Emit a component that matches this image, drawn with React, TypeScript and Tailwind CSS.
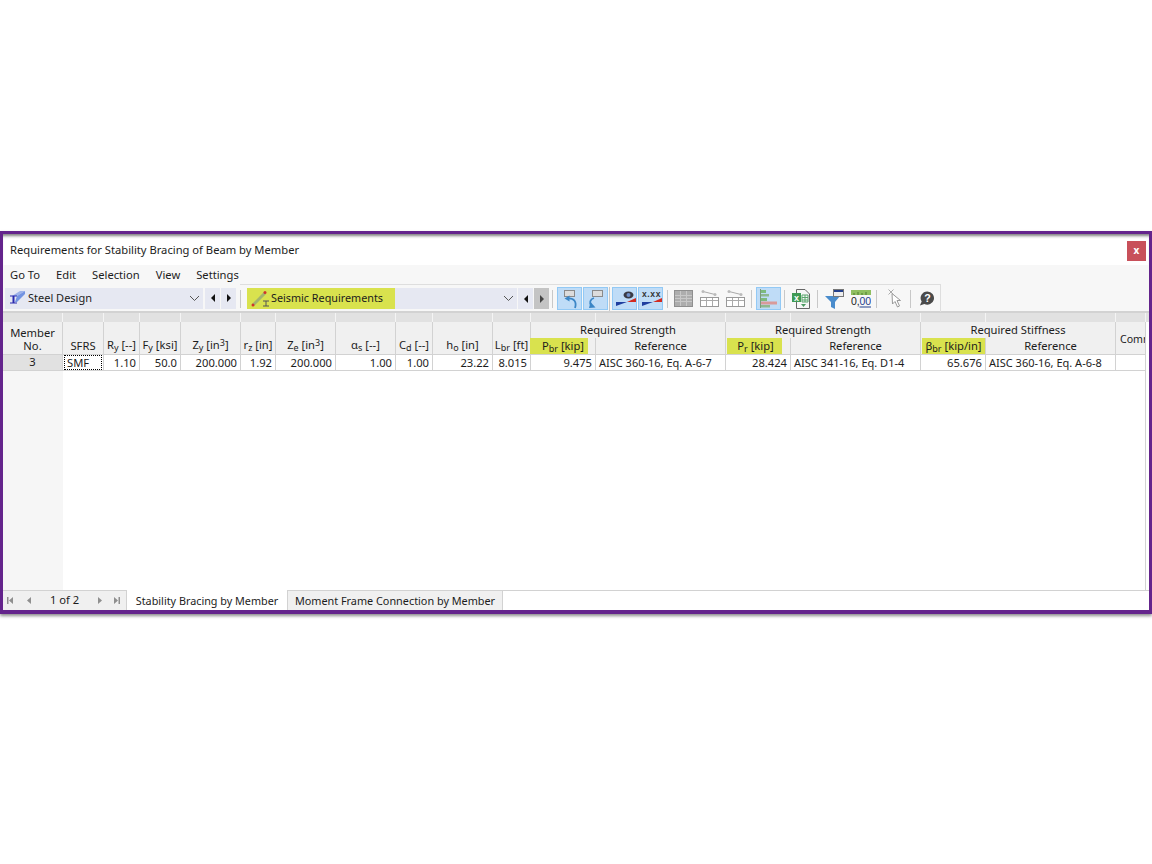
import React from "react";

const Sub = ({ children }: { children: React.ReactNode }) => (
  <span className="text-[9px] relative top-[2px]">{children}</span>
);
const Sup = ({ children }: { children: React.ReactNode }) => (
  <span className="text-[9px] relative top-[-3px]">{children}</span>
);

const Sep = ({ tall }: { tall?: boolean }) => (
  <div className={tall ? "w-px h-[24px] bg-[#c8c8c8] shrink-0" : "w-px h-[18px] bg-[#c8c8c8] shrink-0"} />
);

const Arrow = ({ dir, color = "#111" }: { dir: "l" | "r"; color?: string }) => (
  <svg width="6" height="8" viewBox="0 0 6 8">
    <path d={dir === "l" ? "M5 0V8L1 4Z" : "M1 0V8L5 4Z"} fill={color} />
  </svg>
);

const Chevron = () => (
  <svg width="11" height="7" viewBox="0 0 11 7" fill="none">
    <path d="M1 1L5.5 5.5L10 1" stroke="#555" strokeWidth="1" />
  </svg>
);

const Btn = ({ children, active }: { children: React.ReactNode; active?: boolean }) => (
  <div
    className={
      active
        ? "w-[25px] h-[23px] flex items-center justify-center bg-[#bfdcf7] border border-[#92c9f5] shrink-0"
        : "w-[25px] h-[23px] flex items-center justify-center shrink-0"
    }
  >
    {children}
  </div>
);

const BeamIcon = () => (
  <svg width="16" height="16" viewBox="0 0 16 16">
    <path d="M3 6L11 1H16L8 6Z" fill="#9db2ea" />
    <path d="M8 6L16 1V4L8 12H6Z" fill="#7393e2" />
    <path d="M1 5.5H8V6.5H5.5V12.5H8V13.5H1V12.5H3.5V6.5H1Z" fill="#2a2ab0" />
  </svg>
);

const SeismicIcon = () => (
  <svg width="20" height="18" viewBox="0 0 20 18" className="shrink-0">
    <path d="M2 15L14 3" stroke="#a3b56c" strokeWidth="3" />
    <circle cx="2" cy="15" r="1.5" fill="#d0342c" />
    <circle cx="14" cy="2.5" r="1.5" fill="#d0342c" />
    <path d="M12 11H18M15 11V16M12 16H18" stroke="#555" strokeWidth="1" />
  </svg>
);

const UndoIcon = ({ flip }: { flip?: boolean }) => (
  <svg width="21" height="21" viewBox="0 0 21 21" fill="none">
    {flip ? (
      <>
        <rect x="7.5" y="2.5" width="10" height="6" fill="#dcdcdc" stroke="#8a8a8a" />
        <path d="M9 10C5 11 4 15 6.5 17.5" stroke="#3b86c6" strokeWidth="1.8" />
        <path d="M4 20L10.5 19.5L5.5 14Z" fill="#3b86c6" />
      </>
    ) : (
      <>
        <rect x="5.5" y="2.5" width="10" height="6" fill="#dcdcdc" stroke="#8a8a8a" />
        <path d="M9 10.5C15 10 18 14 16 20" stroke="#3b86c6" strokeWidth="1.8" />
        <path d="M5.5 10.5L10.5 7.5V13.5Z" fill="#3b86c6" />
      </>
    )}
  </svg>
);

const EyeIcon = () => (
  <svg width="23" height="21" viewBox="0 0 23 21">
    <ellipse cx="15.5" cy="7" rx="5" ry="3.5" fill="#3a3a44" />
    <circle cx="15.5" cy="7" r="2" fill="#6f8fc8" />
    <path d="M3 18V14H14Z" fill="#1f3fa0" />
    <path d="M14 14H23V10Z" fill="#d22a20" />
  </svg>
);

const XxxIcon = () => (
  <svg width="23" height="21" viewBox="0 0 23 21">
    <text x="12.5" y="9" textAnchor="middle" fontSize="8.5" fontWeight="700" fill="#333" fontFamily="Liberation Sans, sans-serif" letterSpacing="0.6">x.xx</text>
    <path d="M3 18V14H14Z" fill="#1f3fa0" />
    <path d="M14 14H23V10Z" fill="#d22a20" />
  </svg>
);

const GridIcon = () => (
  <svg width="19" height="18" viewBox="0 0 19 18" fill="none" className="shrink-0">
    <rect x="0.5" y="0.5" width="18" height="16" fill="#adadad" stroke="#8f8f8f" />
    <path d="M1 5.5H18M1 8.5H18M1 11.5H18M6.5 1V16M12.5 1V16" stroke="#c8c8c8" />
  </svg>
);

const TableLinkIcon = () => (
  <svg width="19" height="18" viewBox="0 0 19 18" fill="none" className="shrink-0">
    <path d="M3 1.5L15 4.5" stroke="#aaa" />
    <circle cx="3" cy="1.5" r="1.5" fill="#bbb" />
    <circle cx="15" cy="4.5" r="1.5" fill="#bbb" />
    <rect x="0.5" y="7.5" width="18" height="9" fill="#fff" stroke="#999" />
    <path d="M1 10.5H18M6.5 8V16M12.5 8V16" stroke="#aaa" />
  </svg>
);

const BarsIcon = () => (
  <svg width="19" height="21" viewBox="0 0 19 21">
    <path d="M1.5 1V20" stroke="#7a9a7a" />
    <rect x="2" y="2" width="5" height="3" fill="#7dbb7d" />
    <rect x="2" y="6" width="8" height="2.5" fill="#8fb88f" />
    <rect x="2" y="10" width="6" height="3" fill="#7dbb7d" />
    <rect x="2" y="13.5" width="16" height="3" fill="#d99a9a" />
    <rect x="2" y="17" width="9" height="2.5" fill="#8fb88f" />
  </svg>
);

const ExcelIcon = () => (
  <svg width="18" height="20" viewBox="0 0 18 20" className="shrink-0">
    <path d="M4.5 0.5H13L17.5 5V19.5H4.5Z" fill="#f6f6f6" stroke="#666" />
    <rect x="0" y="4" width="9" height="9" fill="#3f9a55" />
    <text x="4.5" y="11.5" textAnchor="middle" fontSize="9" fontWeight="700" fill="#fff" fontFamily="Liberation Sans, sans-serif">x</text>
    <path d="M10 6H16V13H10ZM10 8.5H16M10 11H16M13 6V13" stroke="#5aa56d" fill="none" />
    <path d="M9 15H14L11.5 18Z" fill="#4a9a60" />
  </svg>
);

const FunnelIcon = () => (
  <svg width="19" height="20" viewBox="0 0 19 20" className="shrink-0">
    <path d="M0 7H15L10 13V20L6 18V13Z" fill="#4a8ccc" />
    <rect x="8.5" y="0.5" width="10" height="7" fill="#eee" stroke="#777" />
    <rect x="9" y="1" width="9" height="2" fill="#24408c" />
  </svg>
);

const DecimalIcon = () => (
  <svg width="20" height="20" viewBox="0 0 20 20" className="shrink-0">
    <rect x="0" y="1" width="20" height="5" fill="#8fbf60" />
    <path d="M3 4V6M7 3V6M11 4V6M15 3V6" stroke="#4d7a2e" />
    <text x="0" y="16" fontSize="10.5" fill="#222" fontFamily="Liberation Sans, sans-serif">0,</text>
    <text x="8.5" y="16" fontSize="10.5" fill="#24408c" fontFamily="Liberation Sans, sans-serif">00</text>
    <path d="M8.5 18H20" stroke="#24408c" />
  </svg>
);

const CursorIcon = () => (
  <svg width="15" height="20" viewBox="0 0 15 20" fill="none" className="shrink-0">
    <path d="M0.5 0.5L5.5 5.5M5.5 0.5L0.5 5.5" stroke="#aaa" />
    <path d="M4 4.5L4.5 15L7 12.5L9.5 18L11.5 17L9 11.5L12.5 11.5Z" fill="#fff" stroke="#999" />
  </svg>
);

const HelpIcon = () => (
  <svg width="16" height="17" viewBox="0 0 18 18" className="shrink-0">
    <path d="M9.5 1A7.5 7.5 0 1 1 6 15.2L1 17L3 12.5A7.5 7.5 0 0 1 9.5 1Z" fill="#4a4a4a" />
    <text x="9.7" y="13" textAnchor="middle" fontSize="12" fontWeight="700" fill="#fff" fontFamily="Liberation Sans, sans-serif">?</text>
  </svg>
);

const bandCell = "bg-[#e1e1e1] border-r border-[#f4f4f4]";
const h = "bg-[#f0f0f0] border-r border-b border-[#d2d2d2] flex items-end justify-center pb-px leading-[15px] whitespace-nowrap";
const top = "bg-[#f0f0f0] border-r border-[#d2d2d2] flex items-start justify-center leading-[15px] whitespace-nowrap";
const d = "bg-white border-r border-b border-[#d2d2d2] flex items-center justify-end pr-[3px] pt-px whitespace-nowrap";
const dl = "bg-white border-r border-b border-[#d2d2d2] flex items-center pl-[3px] pt-px whitespace-nowrap text-[11px]";

const COLS = 18;

const Tri = ({ dir }: { dir: "first" | "prev" | "next" | "last" }) => (
  <svg width="8" height="9" viewBox="0 0 8 9" fill="#8f8f8f">
    {dir === "first" && <path d="M1 1H2.5V8H1ZM7 1V8L3 4.5Z" />}
    {dir === "prev" && <path d="M6 1V8L2 4.5Z" />}
    {dir === "next" && <path d="M2 1V8L6 4.5Z" />}
    {dir === "last" && <path d="M7 1H5.5V8H7ZM1 1V8L5 4.5Z" />}
  </svg>
);

export default function App() {
  return (
    <div className="w-[1152px] h-[864px] bg-white pt-[231px] overflow-hidden text-[11.2px] text-[#1c1c1c] font-['Noto_Sans',sans-serif]">
      <div className="h-[383px] border-x-[3px] border-t-[3px] border-b-[4px] border-[#64248c] flex flex-col bg-white shadow-[0_2px_3px_rgba(0,0,0,0.45)]">
        {/* title */}
        <div className="h-[31px] shrink-0 flex items-center justify-between pl-[7px] pr-[3px] shadow-[inset_0_4px_3px_-2px_rgba(0,0,0,0.5)]">
          <span className="pt-[2px] whitespace-nowrap">Requirements for Stability Bracing of Beam by Member</span>
          <div className="w-[19px] h-[20px] mt-[2px] bg-[#c8505a] text-white flex items-center justify-center text-[10px] font-bold">x</div>
        </div>
        {/* menu */}
        <div className="h-[20px] shrink-0 bg-[#f7f7f7] flex items-center pl-[7px] gap-[16px] whitespace-nowrap">
          <span>Go To</span>
          <span>Edit</span>
          <span>Selection</span>
          <span>View</span>
          <span>Settings</span>
        </div>
        {/* toolbar */}
        <div className="h-[28px] shrink-0 bg-[#f7f7f7] flex items-center border-b-2 border-[#d2d2d2] pl-[2px]">
          <div className="w-[198px] h-[21px] bg-[#e6e8f2] flex items-center justify-between pl-[4px] pr-[3px] shrink-0">
            <div className="flex items-center gap-[3px]">
              <BeamIcon />
              <span className="text-[11px] whitespace-nowrap">Steel Design</span>
            </div>
            <Chevron />
          </div>
          <div className="w-[15px] h-[21px] ml-[2px] bg-[#e6e8f2] flex items-center justify-center"><Arrow dir="l" /></div>
          <div className="w-[15px] h-[21px] ml-px bg-[#e6e8f2] flex items-center justify-center"><Arrow dir="r" /></div>
          <div className="h-[28px] ml-[4px] flex items-center border-t border-r border-[#dedede] w-[701px] shrink-0">
            <Sep />
            <div className="ml-[6px] w-[270px] h-[21px] bg-[#e6e8f2] flex items-center justify-between pr-[3px] shrink-0">
              <div className="w-[148px] h-[21px] bg-[#d9e24e] flex items-center pl-[4px]">
                <SeismicIcon />
                <span className="text-[10.8px] whitespace-nowrap">Seismic Requirements</span>
              </div>
              <Chevron />
            </div>
            <div className="w-[15px] h-[21px] ml-px bg-[#e6e8f2] flex items-center justify-center"><Arrow dir="l" /></div>
            <div className="w-[15px] h-[21px] ml-px bg-[#c4c4c4] flex items-center justify-center"><Arrow dir="r" color="#444" /></div>
            <div className="ml-[3px]"><Sep /></div>
            <div className="ml-[4px] flex gap-px"><Btn active><UndoIcon /></Btn><Btn active><UndoIcon flip /></Btn></div>
            <div className="ml-px"><Sep tall /></div>
            <div className="ml-[2px] flex gap-px"><Btn active><EyeIcon /></Btn><Btn active><XxxIcon /></Btn></div>
            <div className="ml-[4px]"><Sep /></div>
            <div className="ml-[6px]"><GridIcon /></div>
            <div className="ml-[7px]"><TableLinkIcon /></div>
            <div className="ml-[7px]"><TableLinkIcon /></div>
            <div className="ml-[6px]"><Sep /></div>
            <div className="ml-[4px]"><Btn active><BarsIcon /></Btn></div>
            <div className="ml-[3px]"><Sep /></div>
            <div className="ml-[7px]"><ExcelIcon /></div>
            <div className="ml-[7px]"><Sep /></div>
            <div className="ml-[7px]"><FunnelIcon /></div>
            <div className="ml-[7px]"><DecimalIcon /></div>
            <div className="ml-[5px]"><Sep /></div>
            <div className="ml-[11px]"><CursorIcon /></div>
            <div className="ml-[7px]"><Sep /></div>
            <div className="ml-[8px]"><HelpIcon /></div>
          </div>
        </div>
        {/* table */}
        <div className="flex-1 min-h-0 flex flex-col overflow-hidden">
          <div className="grid grid-cols-[60px_41px_36px_41px_60px_35px_60px_60px_37px_60px_38px_65px_130px_65px_130px_65px_130px_30px_1fr] grid-rows-[9px_16px_17px_16px] shrink-0">
            {Array.from({ length: COLS }).map((_, i) => (
              <div key={i} className={bandCell} />
            ))}
            <div className="bg-[#e1e1e1]" />

            <div className="row-span-2 bg-[#f0f0f0] border-r border-b border-[#d2d2d2] flex flex-col items-center pt-[4px] leading-[13px] whitespace-nowrap">
              <span>Member</span>
              <span>No.</span>
            </div>
            <div className={`${h} row-span-2`}>SFRS</div>
            <div className={`${h} row-span-2`}><span>R<Sub>y</Sub> [--]</span></div>
            <div className={`${h} row-span-2`}><span>F<Sub>y</Sub> [ksi]</span></div>
            <div className={`${h} row-span-2`}><span>Z<Sub>y</Sub> [in<Sup>3</Sup>]</span></div>
            <div className={`${h} row-span-2`}><span>r<Sub>z</Sub> [in]</span></div>
            <div className={`${h} row-span-2`}><span>Z<Sub>e</Sub> [in<Sup>3</Sup>]</span></div>
            <div className={`${h} row-span-2`}><span>α<Sub>s</Sub> [--]</span></div>
            <div className={`${h} row-span-2`}><span>C<Sub>d</Sub> [--]</span></div>
            <div className={`${h} row-span-2`}><span>h<Sub>o</Sub> [in]</span></div>
            <div className={`${h} row-span-2`}><span>L<Sub>br</Sub> [ft]</span></div>
            <div className={`${top} col-span-2`}>Required Strength</div>
            <div className={`${top} col-span-2`}>Required Strength</div>
            <div className={`${top} col-span-2`}>Required Stiffness</div>
            <div className="row-span-2 bg-[#f0f0f0] border-r border-b border-[#d2d2d2] flex items-center pl-[4px] pt-[3px] overflow-hidden whitespace-nowrap text-[10.6px]">Comment</div>
            <div className="row-span-3 bg-white" />

            <div className="bg-[#f0f0f0] border-r border-b border-[#d2d2d2] flex items-start">
              <div className="w-[58px] h-[16px] -ml-px bg-[#d9e24e] flex items-center justify-center pl-[8px] leading-[15px] whitespace-nowrap shrink-0"><span>P<Sub>br</Sub> [kip]</span></div>
            </div>
            <div className={h}>Reference</div>
            <div className="bg-[#f0f0f0] border-r border-b border-[#d2d2d2] flex items-start pl-px">
              <div className="w-[55px] h-[16px] bg-[#d9e24e] flex items-center justify-center pl-[2px] leading-[15px] whitespace-nowrap shrink-0"><span>P<Sub>r</Sub> [kip]</span></div>
            </div>
            <div className={h}>Reference</div>
            <div className="bg-[#f0f0f0] border-r border-b border-[#d2d2d2] flex items-start pl-px">
              <div className="w-[63px] h-[16px] bg-[#d9e24e] flex items-center justify-center leading-[15px] whitespace-nowrap shrink-0"><span>β<Sub>br</Sub> [kip/in]</span></div>
            </div>
            <div className={h}>Reference</div>

            <div className="bg-[#e1e1e1] border-r border-b border-[#d2d2d2] flex items-center justify-center">3</div>
            <div className="bg-white border-r border-b border-[#d2d2d2] flex items-start">
              <div className="w-[38px] h-[15px] ml-px border border-dotted border-black flex items-center pl-[2px] pt-px">SMF</div>
            </div>
            <div className={d}>1.10</div>
            <div className={d}>50.0</div>
            <div className={d}>200.000</div>
            <div className={d}>1.92</div>
            <div className={d}>200.000</div>
            <div className={d}>1.00</div>
            <div className={d}>1.00</div>
            <div className={d}>23.22</div>
            <div className={d}>8.015</div>
            <div className={d}>9.475</div>
            <div className={dl}>AISC 360-16, Eq. A-6-7</div>
            <div className={d}>28.424</div>
            <div className={dl}>AISC 341-16, Eq. D1-4</div>
            <div className={d}>65.676</div>
            <div className={dl}>AISC 360-16, Eq. A-6-8</div>
            <div className={d} />
          </div>
          <div className="flex-1 min-h-0 flex">
            <div className="w-[60px] bg-[#f6f6f6]" />
            <div className="flex-1" />
            <div className="w-px bg-[#d2d2d2] mr-[3px]" />
          </div>
        </div>
        {/* tabs */}
        <div className="h-[20px] shrink-0 flex bg-white whitespace-nowrap">
          <div className="w-[124px] bg-[#f0f0f0] border-t border-r border-[#d2d2d2] flex items-center">
            <div className="ml-[3px]"><Tri dir="first" /></div>
            <div className="ml-[11px]"><Tri dir="prev" /></div>
            <span className="ml-[17px] w-[44px]">1 of 2</span>
            <div className="ml-[2px]"><Tri dir="next" /></div>
            <div className="ml-[9px]"><Tri dir="last" /></div>
          </div>
          <div className="w-[160px] flex items-center justify-center pt-[3px] text-[10.8px]">Stability Bracing by Member</div>
          <div className="w-[216px] bg-[#f0f0f0] border-t border-r border-l border-[#d2d2d2] flex items-center justify-center pt-[2px] text-[10.85px]">Moment Frame Connection by Member</div>
          <div className="flex-1 border-t border-[#d2d2d2]" />
        </div>
      </div>
    </div>
  );
}
